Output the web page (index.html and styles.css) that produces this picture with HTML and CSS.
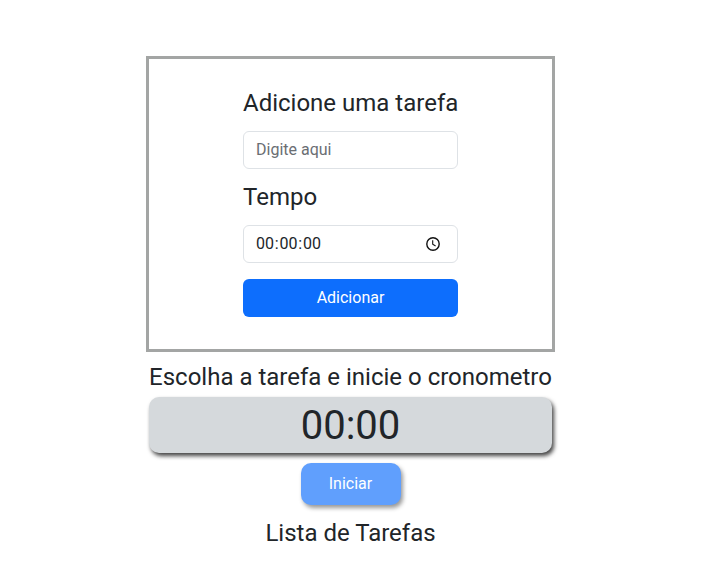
FILE: index.html
```html
<!DOCTYPE html>
<html lang="pt-BR">
<head>
<meta charset="utf-8">
<title>Tarefas</title>
<link rel="stylesheet" href="styles.css">
</head>
<body>
<main class="app">
  <section class="card">
    <form class="form">
      <label class="heading" for="task">Adicione uma tarefa</label>
      <input class="control task" id="task" type="text" placeholder="Digite aqui">
      <label class="heading" for="time">Tempo</label>
      <div class="control time" id="time">
        <span class="fields"><span>00</span>:<span>00</span>:<span>00</span></span>
        <svg class="clock" viewBox="0 0 16 16" fill="none" stroke="#111" stroke-width="1.4"><circle cx="8" cy="8" r="6.2"/><path d="M7.7 4.3v4l2.9 1.7" stroke-width="1.1"/></svg>
      </div>
      <button class="add" type="button">Adicionar</button>
    </form>
  </section>
  <p class="heading prompt">Escolha a tarefa e inicie o cronometro</p>
  <div class="display">00:00</div>
  <button class="start" type="button">Iniciar</button>
  <p class="heading list-title">Lista de Tarefas</p>
</main>
</body>
</html>
```
FILE: styles.css
```css
* { box-sizing: border-box; }
body {
  margin: 0;
  background: #fff;
  color: #212529;
  font-family: Roboto, sans-serif;
  font-size: 16px;
  line-height: 1.5;
}
.app {
  width: 409px;
  margin-left: 146px;
  padding-top: 56px;
  display: flex;
  flex-direction: column;
  align-items: center;
}
.card {
  width: 409px;
  height: 296px;
  border: 3px solid #a3a5a4;
  display: flex;
  justify-content: center;
  padding-top: 30px;
}
.form { width: 215px; display: flex; flex-direction: column; }
.heading { margin: 0; font-size: 24px; line-height: 29px; font-weight: 400; white-space: nowrap; }
.form .heading { line-height: 28px; margin-bottom: 14px; }
.control {
  width: 100%;
  height: 38px;
  padding: 6px 12px;
  border: 1px solid #dee2e6;
  border-radius: 6px;
  font: inherit;
  color: #212529;
  background: #fff;
}
.task { margin-bottom: 14px; padding-bottom: 7px; padding-top: 5px; }
.control::placeholder { color: #6a6e73; opacity: 1; }
.time { display: flex; align-items: center; justify-content: space-between; margin-bottom: 16px; }
.fields { display: flex; gap: 0.8px; }
.clock { width: 16px; height: 16px; margin-right: 4px; }
.add {
  height: 38px;
  border: 0;
  border-radius: 6px;
  background: #0d6efd;
  color: #fff;
  font: inherit;
}
.prompt { margin: 11px 0 5px; }
.display {
  width: 403px;
  height: 56px;
  border-radius: 10px;
  background: #d5d9dc;
  box-shadow: 2px 3px 4px #444;
  font-size: 40px;
  line-height: 58px;
  text-align: center;
}
.start {
  width: 100px;
  height: 42px;
  margin-top: 10px;
  border: 0;
  border-radius: 10px;
  background: #609ffd;
  box-shadow: 2px 3px 4px #999;
  color: #fff;
  font: inherit;
}
.list-title { margin: 14px 0 0; }
```
